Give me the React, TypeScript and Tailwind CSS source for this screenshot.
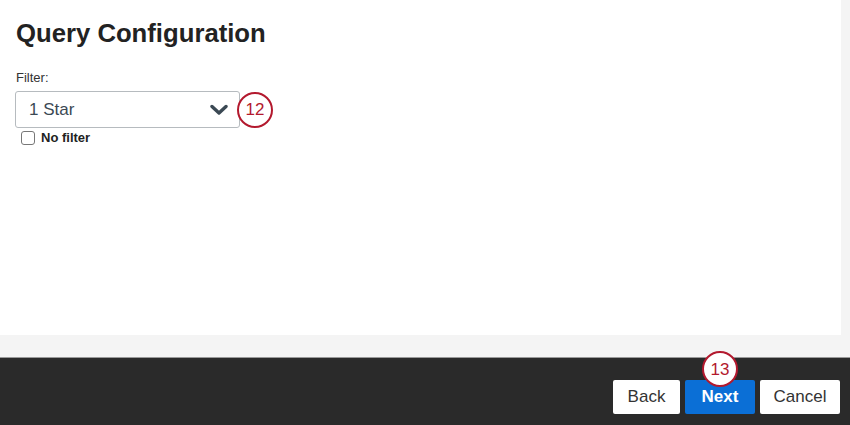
import React from "react";

function Badge({ n }: { n: string }) {
  return (
    <div className="flex h-[36px] w-[36px] items-center justify-center rounded-full border-[2.5px] border-[#b3192e] bg-white text-[17px] leading-none text-[#b3192e]">
      {n}
    </div>
  );
}

export default function App() {
  return (
    <div className="flex h-[425px] w-[850px] flex-col bg-[#f4f4f4] font-['Liberation_Sans',Arial,sans-serif]">
      <div className="flex h-[357px] flex-col">
        <div className="h-[335px] w-[841px] bg-white px-[16px] pt-[16px]">
          <h1 className="text-[25.7px] font-bold leading-[34px] text-[#222]">Query Configuration</h1>
          <div className="mt-[20px] text-[13px] leading-[16px] text-[#333]">Filter:</div>
          <div className="mt-[5px] flex items-center">
            <div className="ml-[-1px] flex h-[37px] w-[225px] items-center justify-between rounded-[3px] border border-[#b6bbbf] pl-[13px] pr-[11px] text-[17px] text-[#3b4954]">
              <span>1 Star</span>
              <svg width="18" height="12" viewBox="0 0 18 12">
                <path d="M2 2.5 L9 9 L16 2.5" fill="none" stroke="#3b4954" strokeWidth="3.4" strokeLinecap="round" strokeLinejoin="round" />
              </svg>
            </div>
            <div className="ml-[-3px]">
              <Badge n="12" />
            </div>
          </div>
          <label className="mt-[2px] ml-[5px] flex items-center gap-[6px]">
            <span className="h-[14px] w-[14px] rounded-[3px] border border-[#777] bg-white" />
            <span className="text-[13px] font-bold leading-[16px] text-[#222]">No filter</span>
          </label>
        </div>
      </div>
      <div className="h-[1px] bg-[#9a9a9a]" />
      <div className="relative flex flex-1 items-start justify-end gap-[5px] bg-[#2a2a2a] pr-[10px] pt-[22px]">
        <button className="h-[34px] w-[67px] rounded-[2px] bg-white text-[17px] text-[#333]">Back</button>
        <div className="relative">
          <button className="h-[34px] w-[70px] rounded-[2px] bg-[#0b6fd6] text-[17px] font-bold text-white">Next</button>
          <div className="absolute left-[17px] top-[-29px]">
            <Badge n="13" />
          </div>
        </div>
        <button className="h-[34px] w-[80px] rounded-[2px] bg-white text-[17px] text-[#333]">Cancel</button>
      </div>
    </div>
  );
}
